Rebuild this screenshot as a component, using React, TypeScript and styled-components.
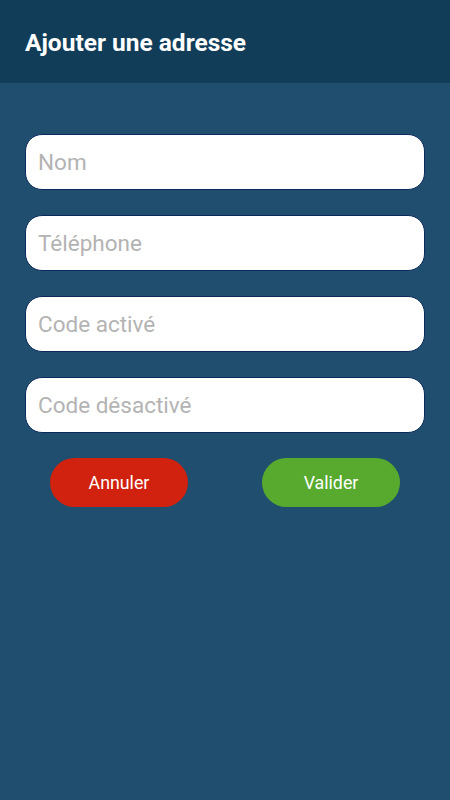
import React from "react";
import styled, { createGlobalStyle } from "styled-components";

const Global = createGlobalStyle`
  html, body { margin: 0; padding: 0; height: 100%; }
  body { background: #1f4e6e; font-family: Roboto, "Noto Sans", sans-serif; }
  #root { min-height: 100vh; }
  input::placeholder { color: #b3b3b3; opacity: 1; }
`;

const Page = styled.div`
  min-height: 100vh;
  background: #1f4e6e;
  display: flex;
  flex-direction: column;
`;

const Header = styled.header`
  height: 83px;
  background: #113d59;
  display: flex;
  align-items: center;
  padding: 0 25px;
  box-sizing: border-box;
`;

const Title = styled.h1`
  margin: 2px 0 0;
  color: #ffffff;
  font-family: Roboto, sans-serif;
  font-weight: 700;
  font-size: 24.5px;
`;

const Form = styled.form`
  display: flex;
  flex-direction: column;
  gap: 25px;
  padding: 51px 25px 0;
`;

const Field = styled.input`
  box-sizing: border-box;
  width: 100%;
  height: 56px;
  border: 1px solid #0b2a5c;
  border-radius: 17px;
  background: #ffffff;
  padding: 0 12px;
  font-family: Roboto, sans-serif;
  font-size: 22.5px;
  color: #333;
  outline: none;
  caret-color: #999;
`;

const Actions = styled.div`
  display: flex;
  justify-content: space-between;
  padding: 0 25px;
`;

const Btn = styled.button<{ $bg: string }>`
  width: 138px;
  height: 49px;
  border: none;
  border-radius: 25px;
  background: ${(p) => p.$bg};
  color: #ffffff;
  font-family: Roboto, sans-serif;
  font-size: 17.8px;
  cursor: pointer;
`;

export default function App() {
  return (
    <>
      <Global />
      <Page>
        <Header>
          <Title>Ajouter une adresse</Title>
        </Header>
        <Form onSubmit={(e) => e.preventDefault()}>
          <Field placeholder="Nom" autoFocus />
          <Field placeholder="Téléphone" />
          <Field placeholder="Code activé" />
          <Field placeholder="Code désactivé" />
          <Actions>
            <Btn type="button" $bg="#d0220f">Annuler</Btn>
            <Btn type="submit" $bg="#57aa2e">Valider</Btn>
          </Actions>
        </Form>
      </Page>
    </>
  );
}
